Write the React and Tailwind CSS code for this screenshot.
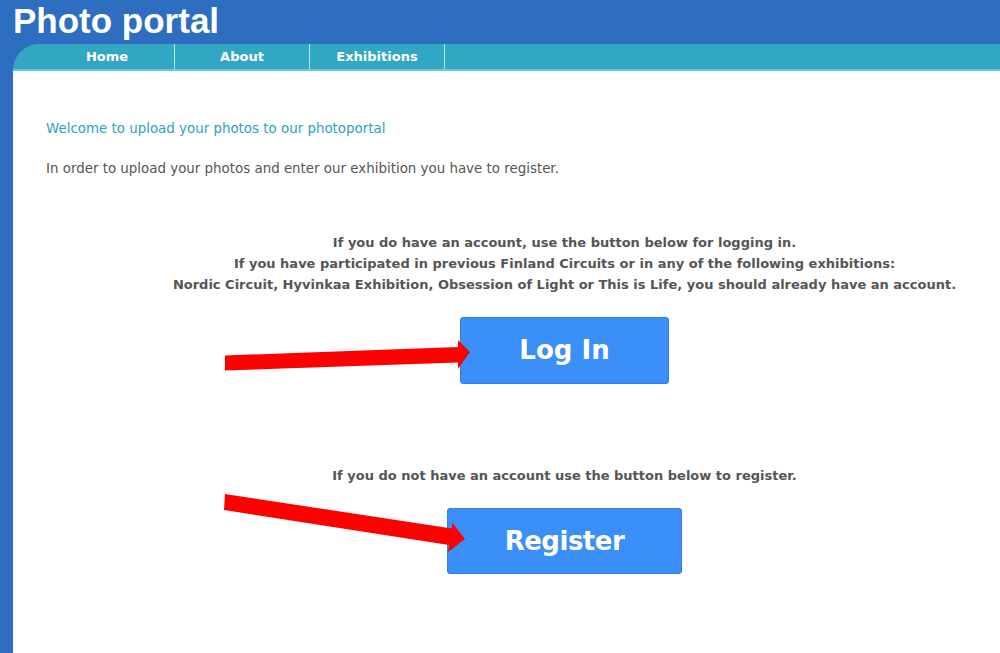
import React from "react";

const font = { fontFamily: '"DejaVu Sans", Verdana, sans-serif' };

export default function App() {
  return (
    <div className="relative w-[1000px] h-[653px] bg-[#2d6ec0] flex flex-col overflow-hidden" style={font}>
      <div className="h-[44px] shrink-0 pl-[13px]">
        <h1
          className="text-white font-bold text-[35px] leading-[42px] tracking-[0px]"
          style={{ fontFamily: '"Liberation Sans", Arial, sans-serif' }}
        >
          Photo portal
        </h1>
      </div>
      <div className="ml-[13px] flex-1 flex flex-col">
        <nav className="h-[27px] shrink-0 bg-[#31a7c3] rounded-tl-[26px] border-b-2 border-[#6cc6dc] flex pl-[27px]">
          {["Home", "About", "Exhibitions"].map((t) => (
            <div
              key={t}
              className="w-[135px] border-r border-[#bfe6ef] flex items-center justify-center text-white font-bold text-[13px] leading-none"
            >
              {t}
            </div>
          ))}
        </nav>
        <main className="flex-1 bg-white pl-[33px] pt-[50px] text-[13.4px] text-[#555]">
          <p className="text-[#2ba1c4] leading-[16px]">Welcome to upload your photos to our photoportal</p>
          <p className="mt-[24px] leading-[16px]">
            In order to upload your photos and enter our exhibition you have to register.
          </p>
          <div className="pl-[83px] mt-[55px] flex flex-col items-center text-[13px]">
            <div className="font-bold text-center leading-[21px]">
              <p>If you do have an account, use the button below for logging in.</p>
              <p>If you have participated in previous Finland Circuits or in any of the following exhibitions:</p>
              <p>
                Nordic Circuit, Hyvinkaa Exhibition, Obsession of Light or This is Life, you should already have an
                account.
              </p>
            </div>
            <button className="mt-[22px] w-[209px] h-[67px] bg-[#3a8ff8] border border-[#2f7fe0] rounded-[3px] text-white font-bold text-[26px]">
              Log In
            </button>
            <p className="mt-[81px] font-bold leading-[21px]">
              If you do not have an account use the button below to register.
            </p>
            <button className="mt-[22px] w-[235px] h-[66px] bg-[#3a8ff8] border border-[#2f7fe0] rounded-[3px] text-white font-bold text-[26px] tracking-[-0.5px]">
              Register
            </button>
          </div>
        </main>
      </div>
      <svg className="absolute left-0 top-0 pointer-events-none" width="1000" height="653" viewBox="0 0 1000 653">
        <polygon
          points="225,355.5 458,347 458,340 470,352 458,369 458,362.5 225,370.5"
          fill="#ff0000"
        />
        <polygon
          points="225,494 452,528.5 452,522.5 465,539 448,552 449,545 224,510"
          fill="#ff0000"
        />
      </svg>
    </div>
  );
}
